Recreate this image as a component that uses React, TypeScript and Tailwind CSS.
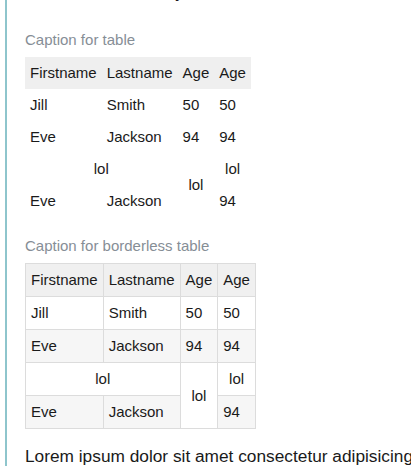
type Row = {
  first: string;
  last: string;
  age1: string;
  age2: string;
};

const rows: Row[] = [
  { first: "Jill", last: "Smith", age1: "50", age2: "50" },
  { first: "Eve", last: "Jackson", age1: "94", age2: "94" },
];

const cell = "px-[5px] py-[5px] align-middle font-normal leading-[22px]";

function DemoTable({ caption, bordered }: { caption: string; bordered: boolean }) {
  const b = bordered ? "border border-[#dcdcdc]" : "";
  const stripe = bordered ? "bg-[#f6f6f6]" : "";
  const left = `${cell} ${b} text-left`;
  const center = `${cell} ${b} text-center`;

  return (
    <table className="border-collapse text-[15px]">
      <caption className="caption-top pb-[6px] text-left text-[15px] leading-[22px] text-[#868e96]">
        {caption}
      </caption>
      <thead>
        <tr className={bordered ? "bg-[#f0f0f0]" : "bg-[#efefef]"}>
          <th className={left}>Firstname</th>
          <th className={left}>Lastname</th>
          <th className={left}>Age</th>
          <th className={left}>Age</th>
        </tr>
      </thead>
      <tbody>
        {rows.map((row, i) => (
          <tr key={row.first} className={i % 2 === 1 ? stripe : ""}>
            <td className={left}>{row.first}</td>
            <td className={left}>{row.last}</td>
            <td className={left}>{row.age1}</td>
            <td className={left}>{row.age2}</td>
          </tr>
        ))}
        <tr>
          <td colSpan={2} className={center}>
            lol
          </td>
          <td rowSpan={2} className={center}>
            lol
          </td>
          <td className={center}>lol</td>
        </tr>
        <tr className={stripe}>
          <td className={left}>Eve</td>
          <td className={left}>Jackson</td>
          <td className={left}>94</td>
        </tr>
      </tbody>
    </table>
  );
}

export default function App() {
  return (
    <div className="h-[466px] w-[411px] overflow-hidden bg-white font-['Liberation_Sans',Arial,sans-serif] text-[#1a1a1a]">
      <div className="ml-[5px] h-full border-l-2 border-[#8ec5cc] pl-[18px]">
        <div className="h-[4px] overflow-hidden">
          <p className="-mt-[20px] whitespace-nowrap text-[17px] leading-[25px]">
            Hello world, made by{" "}
            <a className="underline" href="#">
              a link
            </a>
          </p>
        </div>

        <div className="mt-[25px]">
          <DemoTable caption="Caption for table" bordered={false} />
        </div>

        <div className="mt-[18px]">
          <DemoTable caption="Caption for borderless table" bordered />
        </div>

        <p className="mt-[15px] whitespace-nowrap text-[17.3px] leading-[25px]">
          Lorem ipsum dolor sit amet consectetur adipisicing elit
        </p>
      </div>
    </div>
  );
}
